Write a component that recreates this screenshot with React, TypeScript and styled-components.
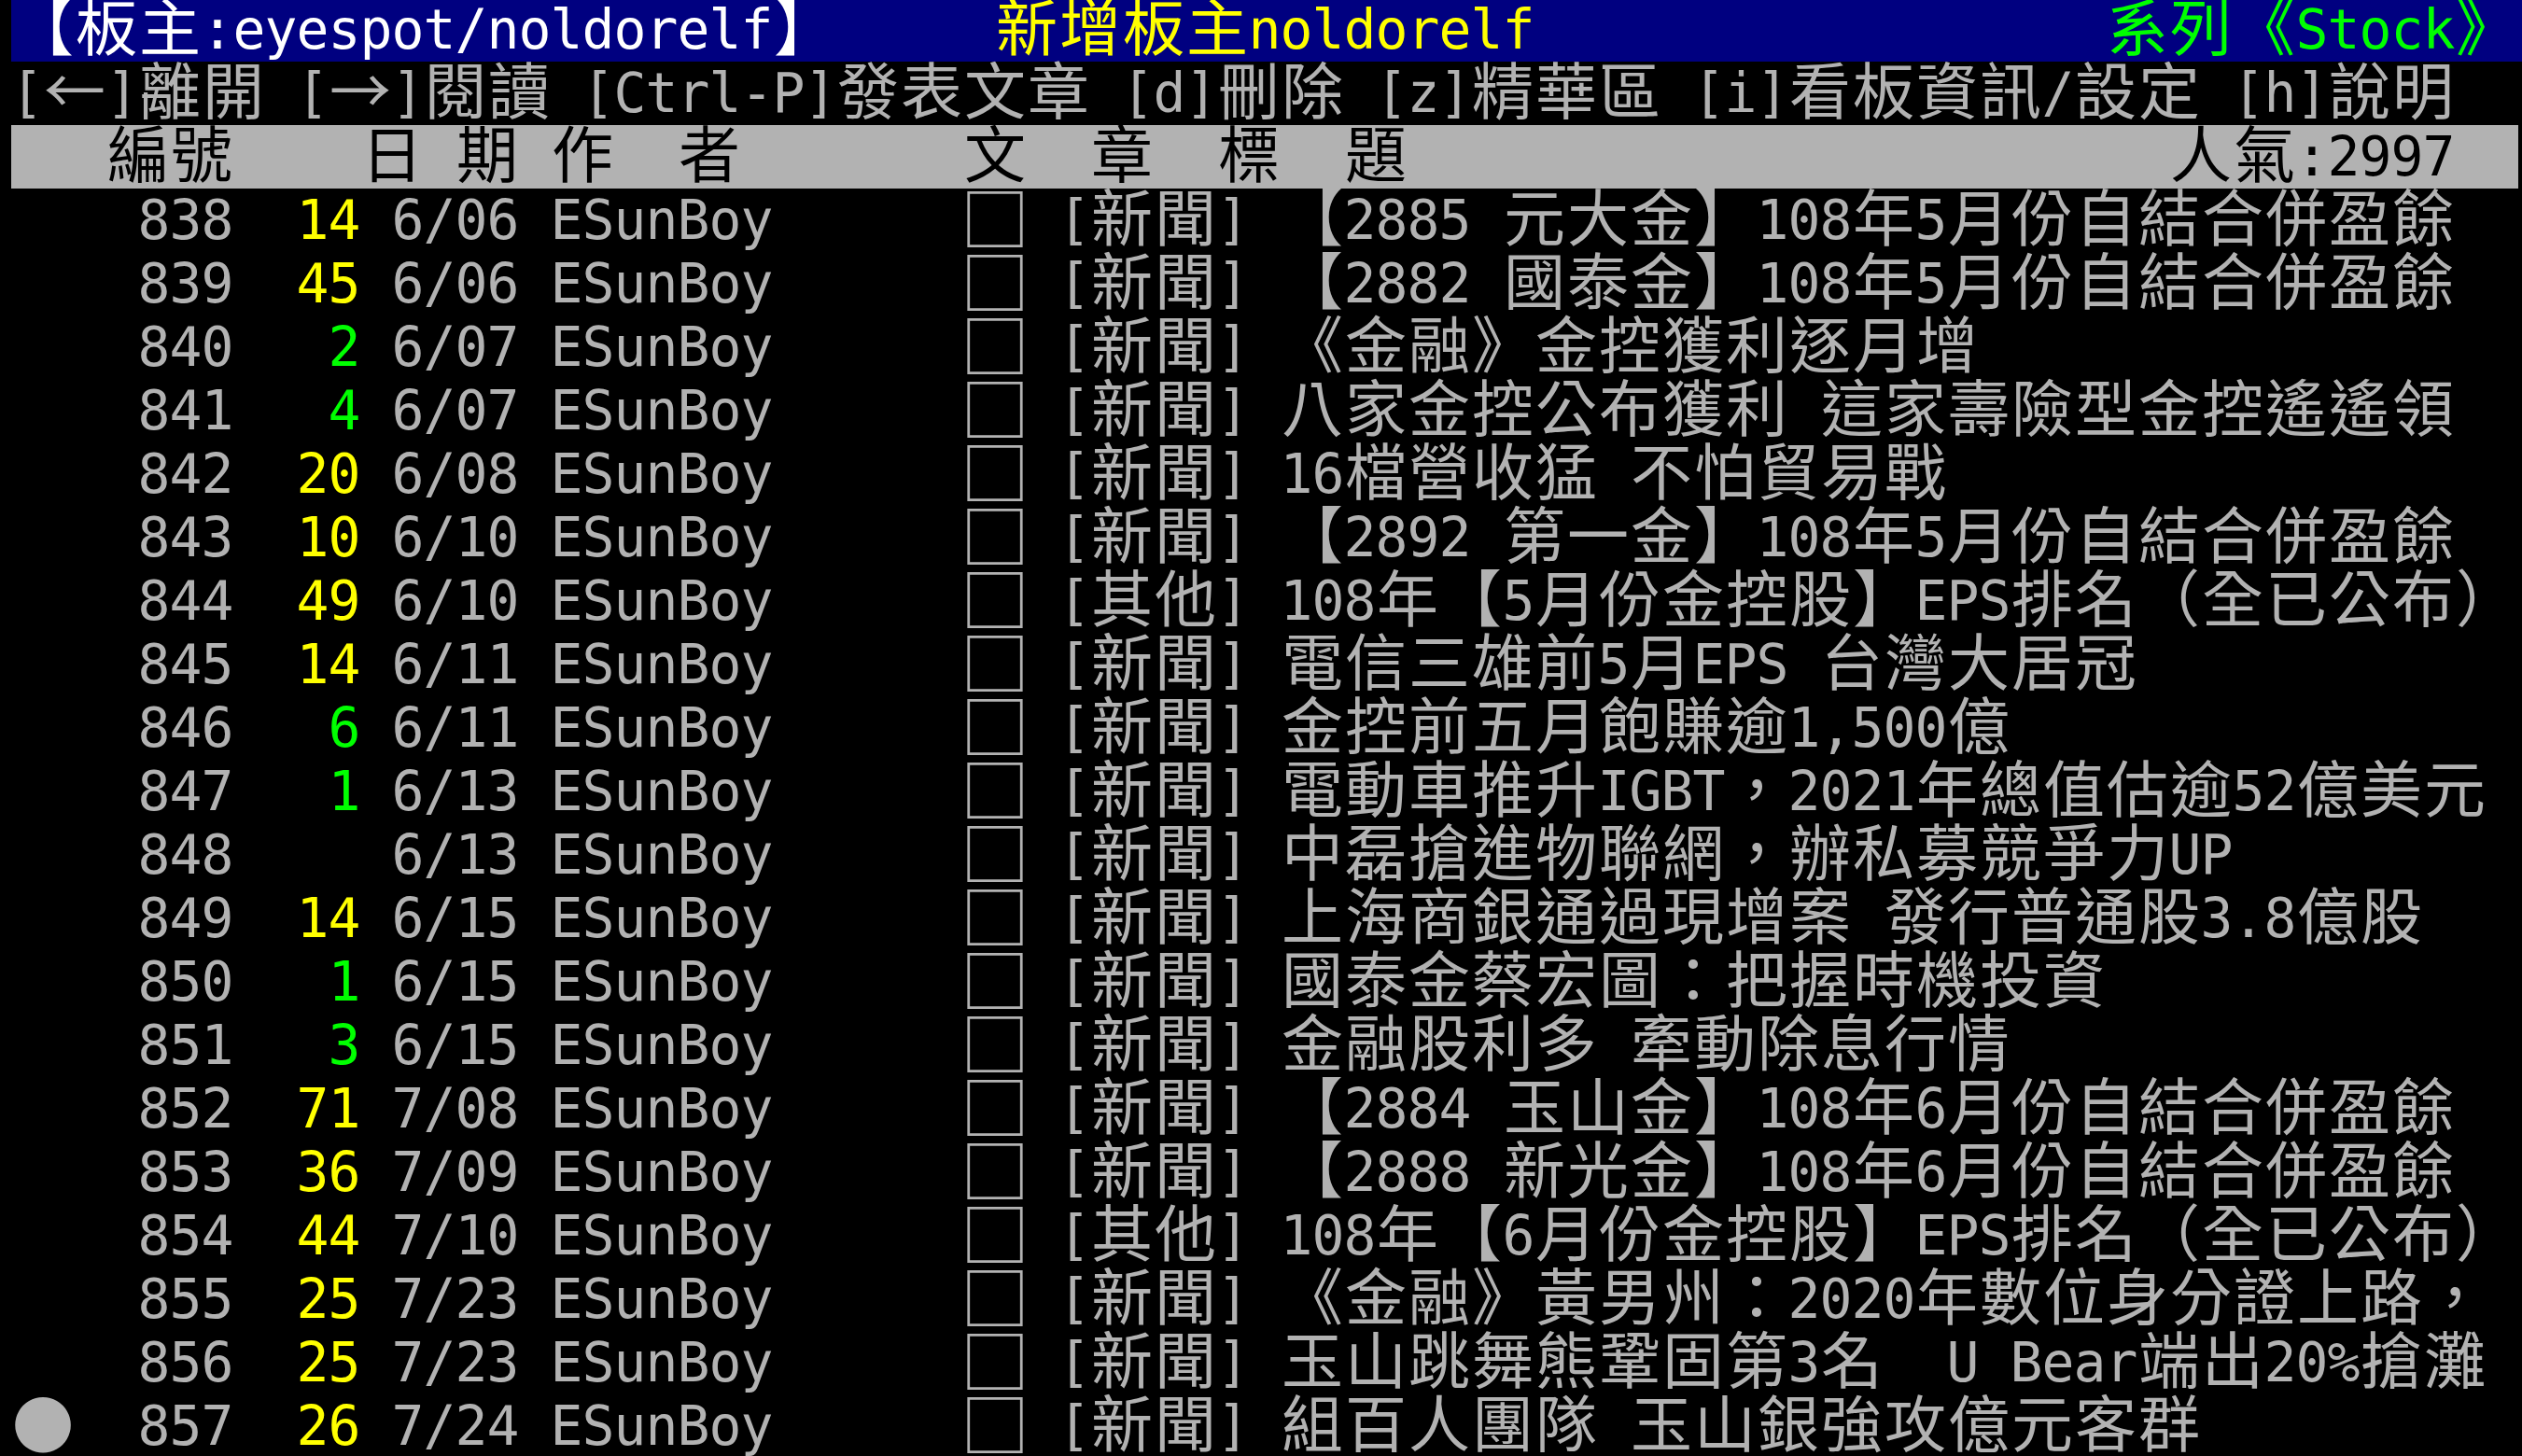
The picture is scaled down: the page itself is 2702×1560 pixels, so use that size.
import React from "react";
import styled, { createGlobalStyle } from "styled-components";

const CELL_W = 34;
const ROW_H = 68;

const GRAY = "#b2b2b2";
const WHITE = "#ffffff";
const YELLOW = "#ffff00";
const GREEN = "#00ff00";
const BLACK = "#000000";
const NAVY = "#000080";

const GlobalStyle = createGlobalStyle`
  html, body {
    margin: 0;
    padding: 0;
    background: #000;
    overflow: hidden;
  }
`;

const Screen = styled.div`
  width: 2702px;
  height: 1560px;
  overflow: hidden;
  background: #000;
  box-sizing: border-box;
  padding-left: 12px;
`;

const Rows = styled.div`
  display: flex;
  flex-direction: column;
  margin-top: -2px;
`;

const Line = styled.div<{ $bg: string }>`
  display: flex;
  height: ${ROW_H}px;
  align-self: flex-start;
  background: ${(p) => p.$bg};
`;

const Cell = styled.span<{ $wide: boolean; $color: string }>`
  flex: none;
  display: flex;
  justify-content: center;
  width: ${(p) => (p.$wide ? CELL_W * 2 : CELL_W)}px;
  height: ${ROW_H}px;
  color: ${(p) => p.$color};
  white-space: pre;
  font-family: ${(p) =>
    p.$wide
      ? '"Noto Sans CJK TC", "Noto Sans CJK SC", sans-serif'
      : '"DejaVu Sans Mono", "Liberation Mono", monospace'};
  font-size: ${(p) => (p.$wide ? 66 : 58)}px;
  line-height: ${(p) => (p.$wide ? 54 : 68)}px;
`;

const CursorMark = styled(Cell)`
  font-family: "DejaVu Sans", sans-serif;
  font-size: 78px;
  line-height: 52px;
`;

const BoxMark = styled(Cell)`
  font-size: 74px;
  line-height: 58px;
`;

type Seg = [string, string];
type Row = { bg: string; segs: Seg[] };

const sp = (n: number) => " ".repeat(n);

const header: Row = {
  bg: NAVY,
  segs: [
    ["【板主:eyespot/noldorelf】", WHITE],
    [sp(5), WHITE],
    ["新增板主noldorelf", YELLOW],
    [sp(18), WHITE],
    ["系列《Stock》", GREEN],
    [sp(1), WHITE],
  ],
};

const menu: Row = {
  bg: "transparent",
  segs: [
    [
      "[←]離開 [→]閱讀 [Ctrl-P]發表文章 [d]刪除 [z]精華區 [i]看板資訊/設定 [h]說明",
      GRAY,
    ],
  ],
};

const columns: Row = {
  bg: GRAY,
  segs: [
    [
      "   編號    日 期 作  者       文  章  標  題" + sp(24) + "人氣:2997  ",
      BLACK,
    ],
  ],
};

type Post = [number, number, string, string];

const posts: Post[] = [
  [838, 14, "6/06", "[新聞] 【2885 元大金】108年5月份自結合併盈餘"],
  [839, 45, "6/06", "[新聞] 【2882 國泰金】108年5月份自結合併盈餘"],
  [840, 2, "6/07", "[新聞] 《金融》金控獲利逐月增"],
  [841, 4, "6/07", "[新聞] 八家金控公布獲利 這家壽險型金控遙遙領"],
  [842, 20, "6/08", "[新聞] 16檔營收猛 不怕貿易戰"],
  [843, 10, "6/10", "[新聞] 【2892 第一金】108年5月份自結合併盈餘"],
  [844, 49, "6/10", "[其他] 108年【5月份金控股】EPS排名（全已公布）"],
  [845, 14, "6/11", "[新聞] 電信三雄前5月EPS 台灣大居冠"],
  [846, 6, "6/11", "[新聞] 金控前五月飽賺逾1,500億"],
  [847, 1, "6/13", "[新聞] 電動車推升IGBT，2021年總值估逾52億美元"],
  [848, 0, "6/13", "[新聞] 中磊搶進物聯網，辦私募競爭力UP"],
  [849, 14, "6/15", "[新聞] 上海商銀通過現增案 發行普通股3.8億股"],
  [850, 1, "6/15", "[新聞] 國泰金蔡宏圖：把握時機投資"],
  [851, 3, "6/15", "[新聞] 金融股利多 牽動除息行情"],
  [852, 71, "7/08", "[新聞] 【2884 玉山金】108年6月份自結合併盈餘"],
  [853, 36, "7/09", "[新聞] 【2888 新光金】108年6月份自結合併盈餘"],
  [854, 44, "7/10", "[其他] 108年【6月份金控股】EPS排名（全已公布）"],
  [855, 25, "7/23", "[新聞] 《金融》黃男州：2020年數位身分證上路，"],
  [856, 25, "7/23", "[新聞] 玉山跳舞熊鞏固第3名  U Bear端出20%搶灘"],
  [857, 26, "7/24", "[新聞] 組百人團隊 玉山銀強攻億元客群"],
];

const postRow = ([num, rec, date, title]: Post, cursor: boolean): Row => ({
  bg: "transparent",
  segs: [
    [cursor ? "●" : sp(2), GRAY],
    [String(num).padStart(5) + " ", GRAY],
    [rec ? String(rec).padStart(3) : sp(3), rec >= 10 ? YELLOW : GREEN],
    [" " + date + " " + "ESunBoy".padEnd(13) + "□ " + title, GRAY],
  ],
});

const screenRows: Row[] = [
  header,
  menu,
  columns,
  ...posts.map((p, i) => postRow(p, i === posts.length - 1)),
];

const isWide = (ch: string) => (ch.codePointAt(0) ?? 0) > 0x7f;

function TermLine({ row }: { row: Row }) {
  const cells: React.ReactNode[] = [];
  row.segs.forEach(([text, color], si) => {
    Array.from(text).forEach((ch, ci) => {
      const key = `${si}-${ci}`;
      if (ch === "●") {
        cells.push(
          <CursorMark key={key} $wide $color={color}>
            {ch}
          </CursorMark>
        );
      } else if (ch === "□") {
        cells.push(
          <BoxMark key={key} $wide $color={color}>
            {ch}
          </BoxMark>
        );
      } else {
        cells.push(
          <Cell key={key} $wide={isWide(ch)} $color={color}>
            {ch}
          </Cell>
        );
      }
    });
  });
  return <Line $bg={row.bg}>{cells}</Line>;
}

export default function App() {
  return (
    <>
      <GlobalStyle />
      <Screen>
        <Rows>
          {screenRows.map((r, i) => (
            <TermLine key={i} row={r} />
          ))}
        </Rows>
      </Screen>
    </>
  );
}
